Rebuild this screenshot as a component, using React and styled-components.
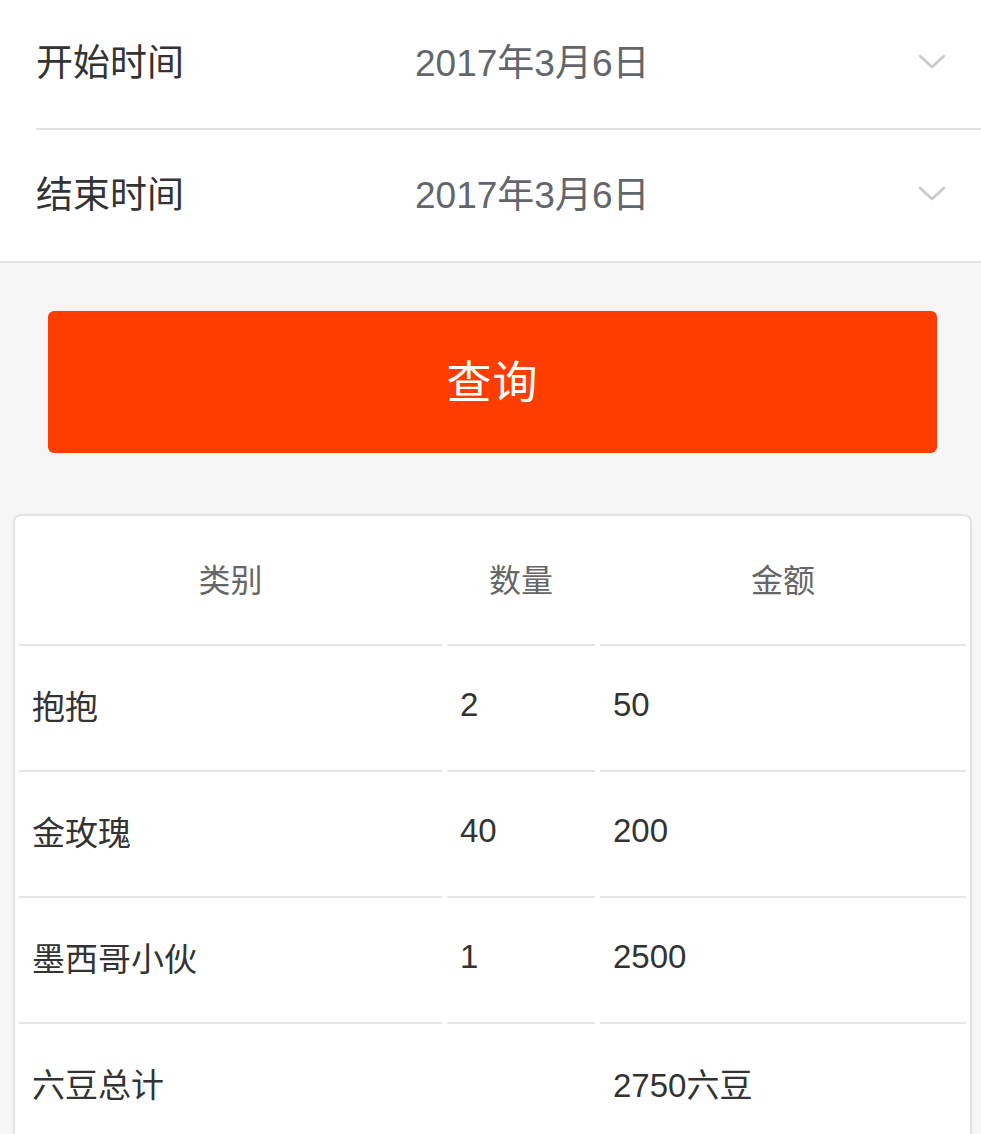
import React from "react";
import styled, { createGlobalStyle } from "styled-components";

const GlobalStyle = createGlobalStyle`
  html, body {
    margin: 0;
    padding: 0;
    background: #f5f5f5;
  }
  body {
    font-family: "Liberation Sans", "Noto Sans CJK SC", sans-serif;
  }
`;

const Page = styled.div`
  width: 981px;
  min-height: 1134px;
  background: #f5f5f5;
  overflow: hidden;
`;

const Picker = styled.section`
  background: #fff;
  border-bottom: 2px solid #e1e1e1;
`;

const PickerRow = styled.div`
  display: flex;
  align-items: center;
  box-sizing: border-box;
  height: ${(p) => (p.$last ? "131px" : "130px")};
  padding-bottom: 8px;
  margin-left: 36px;
  padding-right: 35px;
  border-bottom: ${(p) => (p.$last ? "none" : "2px solid #e1e1e1")};
`;

const Label = styled.span`
  width: 379px;
  font-size: 37px;
  color: #333;
`;

const Value = styled.span`
  flex: 1;
  font-size: 37px;
  color: #62666b;
`;

const ChevronIcon = styled.svg`
  margin-top: 4px;
`;

const Chevron = () => (
  <ChevronIcon width="28" height="16" viewBox="0 0 28 16" fill="none">
    <path
      d="M2 2 L14 13 L26 2"
      stroke="#c8c8cd"
      strokeWidth="2.6"
      strokeLinecap="round"
      strokeLinejoin="round"
    />
  </ChevronIcon>
);

const QueryButton = styled.button`
  display: flex;
  align-items: center;
  justify-content: center;
  box-sizing: border-box;
  width: 889px;
  height: 142px;
  padding: 0 0 6px;
  margin: 48px 0 0 48px;
  border: none;
  border-radius: 6px;
  background: #ff3d00;
  color: #fff;
  font-family: "Noto Sans CJK SC", sans-serif;
  font-size: 45px;
  letter-spacing: 1px;
`;

const Card = styled.div`
  width: 955px;
  margin: 61px 0 0 13px;
  background: #fff;
  border: 2px solid #e3e3e3;
  border-bottom: none;
  border-radius: 8px 8px 0 0;
`;

const Row = styled.div`
  display: grid;
  grid-template-columns: 423px 148px 366px;
  column-gap: 5px;
  padding: 0 4px;
`;

const HeadCell = styled.div`
  display: flex;
  align-items: center;
  justify-content: center;
  box-sizing: border-box;
  height: 130px;
  padding-bottom: 4px;
  border-bottom: 2px solid #e5e5e5;
  font-size: 32px;
  color: #666;
`;

const Cell = styled.div`
  display: flex;
  align-items: center;
  box-sizing: border-box;
  height: 126px;
  padding: 0 0 6px 13px;
  border-bottom: 2px solid #e5e5e5;
  font-size: 33px;
  color: #333;
`;

const rows = [
  ["抱抱", "2", "50"],
  ["金玫瑰", "40", "200"],
  ["墨西哥小伙", "1", "2500"],
  ["六豆总计", "", "2750六豆"],
];

export default function App() {
  return (
    <Page>
      <GlobalStyle />
      <Picker>
        <PickerRow>
          <Label>开始时间</Label>
          <Value>2017年3月6日</Value>
          <Chevron />
        </PickerRow>
        <PickerRow $last>
          <Label>结束时间</Label>
          <Value>2017年3月6日</Value>
          <Chevron />
        </PickerRow>
      </Picker>
      <QueryButton>查询</QueryButton>
      <Card>
        <Row>
          <HeadCell>类别</HeadCell>
          <HeadCell>数量</HeadCell>
          <HeadCell>金额</HeadCell>
        </Row>
        {rows.map((r) => (
          <Row key={r[0]}>
            <Cell>{r[0]}</Cell>
            <Cell>{r[1]}</Cell>
            <Cell>{r[2]}</Cell>
          </Row>
        ))}
      </Card>
    </Page>
  );
}
